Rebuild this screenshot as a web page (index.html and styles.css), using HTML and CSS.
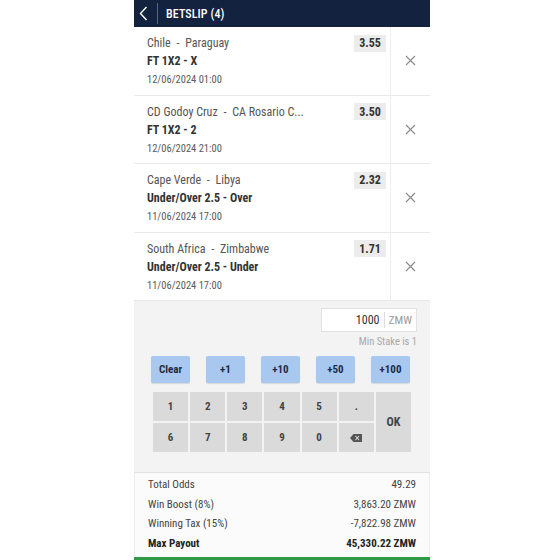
FILE: index.html
```html
<!DOCTYPE html>
<html lang="en">
<head>
    <meta charset="UTF-8">
    <meta name="viewport" content="width=device-width, initial-scale=1.0">
    <title>Betslip</title>
    <link rel="stylesheet" href="styles.css">
</head>
<body>
    <div class="slip">
        <header class="slip-head">
            <span class="back">
                <svg width="9" height="15" viewBox="0 0 9 15"><path d="M7.5 1 L1.5 7.5 L7.5 14" fill="none" stroke="#fff" stroke-width="1.4"/></svg>
            </span>
            <span class="title">BETSLIP (4)</span>
        </header>

        <div class="bets">
            <div class="bet">
                <div class="bet-info">
                    <div class="bet-top"><span class="match">Chile <i>-</i> Paraguay</span><span class="odds">3.55</span></div>
                    <div class="market">FT 1X2 - X</div>
                    <div class="date">12/06/2024 01:00</div>
                </div>
                <button class="remove"><svg width="11" height="11" viewBox="0 0 11 11"><path d="M1 1 L10 10 M10 1 L1 10" stroke="#8a8a8a" stroke-width="1.1"/></svg></button>
            </div>
            <div class="bet">
                <div class="bet-info">
                    <div class="bet-top"><span class="match">CD Godoy Cruz <i>-</i> CA Rosario C...</span><span class="odds">3.50</span></div>
                    <div class="market">FT 1X2 - 2</div>
                    <div class="date">12/06/2024 21:00</div>
                </div>
                <button class="remove"><svg width="11" height="11" viewBox="0 0 11 11"><path d="M1 1 L10 10 M10 1 L1 10" stroke="#8a8a8a" stroke-width="1.1"/></svg></button>
            </div>
            <div class="bet">
                <div class="bet-info">
                    <div class="bet-top"><span class="match">Cape Verde <i>-</i> Libya</span><span class="odds">2.32</span></div>
                    <div class="market">Under/Over 2.5 - Over</div>
                    <div class="date">11/06/2024 17:00</div>
                </div>
                <button class="remove"><svg width="11" height="11" viewBox="0 0 11 11"><path d="M1 1 L10 10 M10 1 L1 10" stroke="#8a8a8a" stroke-width="1.1"/></svg></button>
            </div>
            <div class="bet">
                <div class="bet-info">
                    <div class="bet-top"><span class="match">South Africa <i>-</i> Zimbabwe</span><span class="odds">1.71</span></div>
                    <div class="market">Under/Over 2.5 - Under</div>
                    <div class="date">11/06/2024 17:00</div>
                </div>
                <button class="remove"><svg width="11" height="11" viewBox="0 0 11 11"><path d="M1 1 L10 10 M10 1 L1 10" stroke="#8a8a8a" stroke-width="1.1"/></svg></button>
            </div>
        </div>

        <div class="stake-panel">
            <div class="stake-input">
                <span class="amount">1000</span>
                <span class="currency">ZMW</span>
            </div>
            <div class="min-stake">Min Stake is 1</div>

            <div class="quick">
                <button>Clear</button>
                <button>+1</button>
                <button>+10</button>
                <button>+50</button>
                <button>+100</button>
            </div>

            <div class="keypad">
                <button>1</button>
                <button>2</button>
                <button>3</button>
                <button>4</button>
                <button>5</button>
                <button>.</button>
                <button class="ok">OK</button>
                <button>6</button>
                <button>7</button>
                <button>8</button>
                <button>9</button>
                <button>0</button>
                <button class="del">
                    <svg width="12" height="8" viewBox="0 0 12 8"><path d="M3.5 0 H12 V8 H3.5 L0 4 Z" fill="#555"/><path d="M5.5 2 L9 6 M9 2 L5.5 6" stroke="#dadada" stroke-width="1.1"/></svg>
                </button>
            </div>
        </div>

        <div class="summary">
            <div class="sum-row"><span>Total Odds</span><span>49.29</span></div>
            <div class="sum-row"><span>Win Boost (8%)</span><span>3,863.20 ZMW</span></div>
            <div class="sum-row"><span>Winning Tax (15%)</span><span>-7,822.98 ZMW</span></div>
            <div class="sum-row total"><span>Max Payout</span><span>45,330.22 ZMW</span></div>
        </div>
        <div class="place-bar"></div>
    </div>
</body>
</html>
```

FILE: styles.css
```css
body {
    margin: 0;
    background: #fff;
    font-family: "Roboto Condensed", "Liberation Sans Narrow", Roboto, sans-serif;
    color: #333;
}

button {
    font-family: inherit;
    border: none;
    padding: 0;
    cursor: pointer;
}

.slip {
    width: 296px;
    margin-left: 134px;
}

/* header */

.slip-head {
    height: 27px;
    background: #13233f;
    display: flex;
    align-items: center;
    color: #fff;
}

.back {
    width: 18px;
    height: 21px;
    padding-left: 5px;
    display: flex;
    align-items: center;
    border-right: 1px solid rgba(255, 255, 255, 0.3);
}

.title {
    margin-left: 8px;
    font-size: 12px;
    font-weight: 500;
    letter-spacing: 0.1px;
}

/* selections */

.bet {
    display: flex;
    height: 68.5px;
    box-sizing: border-box;
    border-bottom: 1px solid #e8e8e8;
}

.bet-info {
    flex: 1;
    padding: 7px 4px 0 13px;
    border-right: 1px solid #eeeeee;
}

.bet-top {
    display: flex;
    justify-content: space-between;
    align-items: center;
    height: 18px;
}

.match {
    font-size: 12px;
    color: #555;
}

.match i {
    font-style: normal;
    margin: 0 3px;
}

.odds {
    width: 32px;
    height: 17px;
    background: #ececec;
    display: flex;
    align-items: center;
    justify-content: center;
    font-size: 12px;
    font-weight: 700;
    color: #333;
}

.market {
    line-height: 19px;
    font-size: 12px;
    font-weight: 700;
    color: #333;
}

.date {
    line-height: 18px;
    font-size: 10.5px;
    color: #5a5a5a;
}

.remove {
    width: 39px;
    background: transparent;
    display: flex;
    align-items: center;
    justify-content: center;
}

/* stake entry */

.stake-panel {
    background: #f3f3f3;
    padding: 7px 13px 20px 17px;
    border-bottom: 1px solid #e2e2e2;
}

.stake-input {
    margin-left: auto;
    width: 96px;
    height: 24px;
    box-sizing: border-box;
    background: #fff;
    border: 1px solid #e2e2e2;
    display: flex;
    align-items: center;
}

.amount {
    flex: 1;
    text-align: right;
    padding-right: 4px;
    font-size: 12px;
    color: #333;
}

.currency {
    border-left: 1px solid #dddddd;
    padding: 0 4px;
    line-height: 16px;
    font-size: 11.5px;
    color: #9a9a9a;
}

.min-stake {
    margin-top: 3px;
    line-height: 14px;
    text-align: right;
    font-size: 10.5px;
    color: #a8a8a8;
}

.quick {
    display: flex;
    gap: 16px;
    margin-top: 7px;
}

.quick button {
    width: 39px;
    height: 27px;
    background: #a9c8ef;
    border-radius: 2px;
    box-shadow: 0 1px 1px rgba(0, 0, 0, 0.12);
    font-size: 11px;
    font-weight: 700;
    color: #1e2c44;
}

.keypad {
    display: grid;
    grid-template-columns: repeat(7, 1fr);
    grid-template-rows: 29px 29px;
    gap: 2px;
    width: 258px;
    margin: 9px 0 0 2px;
}

.keypad button {
    background: #dadada;
    font-size: 11px;
    font-weight: 700;
    color: #444;
}

.keypad .ok {
    grid-column: 7;
    grid-row: 1 / span 2;
    font-size: 12px;
}

.keypad .del {
    display: flex;
    align-items: center;
    justify-content: center;
}

/* totals */

.summary {
    background: #fbfbfb;
    padding: 2px 13px 4px;
    border-left: 1px solid #ececec;
    border-right: 1px solid #ececec;
}

.sum-row {
    display: flex;
    justify-content: space-between;
    line-height: 19.5px;
    font-size: 11px;
    color: #444;
}

.sum-row.total {
    font-weight: 700;
    color: #222;
}

.place-bar {
    height: 3px;
    background: #2f9a47;
}
```
